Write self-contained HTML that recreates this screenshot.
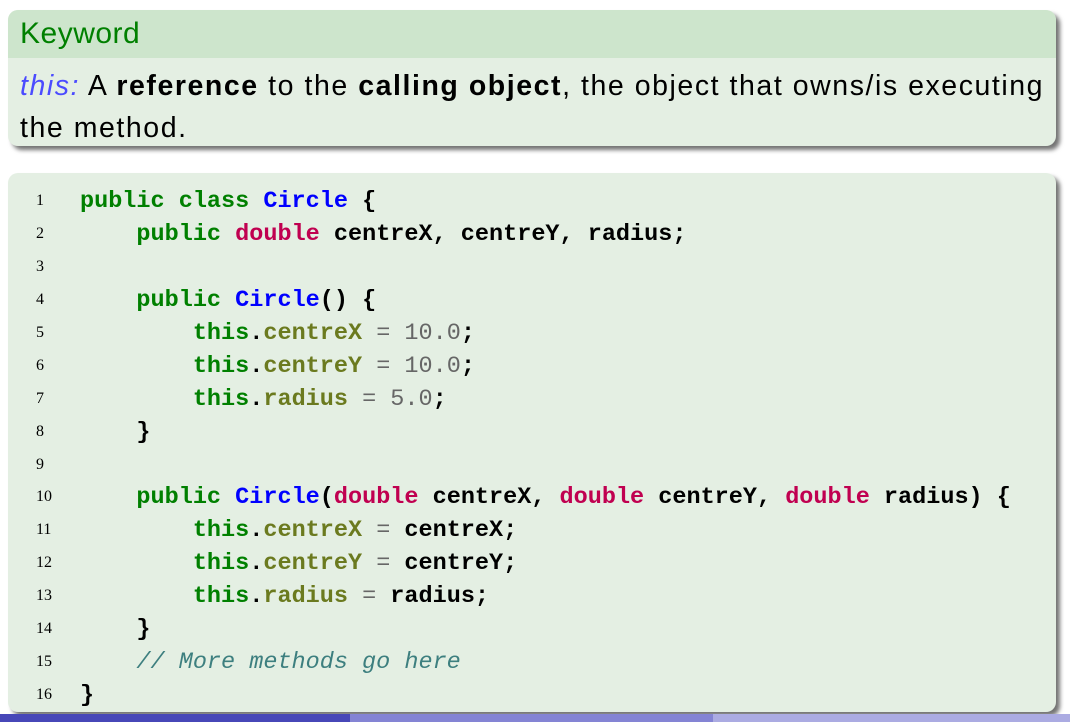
<!DOCTYPE html>
<html><head><meta charset="utf-8"><style>
*{margin:0;padding:0;box-sizing:border-box}
body{width:1070px;height:722px;background:#fff;position:relative;overflow:hidden;font-family:"Liberation Sans",sans-serif}
.box{position:absolute;left:8px;width:1048px;border-radius:10px;box-shadow:4px 4px 4px rgba(0,0,0,.55)}
#kw{top:10px;height:136px;background:#e4efe3}
#kw .h{height:48px;background:#cde5cc;border-radius:10px 10px 0 0;color:#008000;font-size:30px;letter-spacing:0.5px;padding:7px 0 0 12px}
#kw .b{font-size:28.5px;letter-spacing:1.55px;line-height:42px;padding:7px 0 0 12px;color:#000;white-space:nowrap}
#kw .b i{color:#4b4bff}
#code{top:173px;height:539px;background:#e4efe3}
.ln{position:absolute;left:36px;width:20px;font-family:"Liberation Serif",serif;font-size:16px;color:#000}
.cl{position:absolute;left:80px;margin-top:2px;font-family:"Liberation Mono",monospace;font-size:23.5px;white-space:pre;color:#000;font-weight:bold}
.k{color:#008000}.t{color:#c00050}.c{color:#0000ff}.f{color:#6b7a1f}.n{color:#666;font-weight:normal}.cm{color:#3d7f7f;font-style:italic;font-weight:normal}
.ft{position:absolute;top:714px;height:8px}
</style></head><body>
<div class="box" id="kw"><div class="h">Keyword</div>
<div class="b"><i>this:</i> A <b>reference</b> to the <b>calling object</b>, the object that owns/is executing<br>the method.</div></div>
<div class="box" id="code"></div>
<div class="ln" style="top:192px">1</div><div class="cl" style="top:186px"><span class="k">public class</span> <span class="c">Circle</span> {</div>
<div class="ln" style="top:225px">2</div><div class="cl" style="top:219px">    <span class="k">public</span> <span class="t">double</span> centreX, centreY, radius;</div>
<div class="ln" style="top:258px">3</div>
<div class="ln" style="top:291px">4</div><div class="cl" style="top:285px">    <span class="k">public</span> <span class="c">Circle</span>() {</div>
<div class="ln" style="top:324px">5</div><div class="cl" style="top:318px">        <span class="k">this</span>.<span class="f">centreX</span> <span class="n">= 10.0</span>;</div>
<div class="ln" style="top:357px">6</div><div class="cl" style="top:351px">        <span class="k">this</span>.<span class="f">centreY</span> <span class="n">= 10.0</span>;</div>
<div class="ln" style="top:390px">7</div><div class="cl" style="top:384px">        <span class="k">this</span>.<span class="f">radius</span> <span class="n">= 5.0</span>;</div>
<div class="ln" style="top:423px">8</div><div class="cl" style="top:417px">    }</div>
<div class="ln" style="top:456px">9</div>
<div class="ln" style="top:488px">10</div><div class="cl" style="top:482px">    <span class="k">public</span> <span class="c">Circle</span>(<span class="t">double</span> centreX, <span class="t">double</span> centreY, <span class="t">double</span> radius) {</div>
<div class="ln" style="top:521px">11</div><div class="cl" style="top:515px">        <span class="k">this</span>.<span class="f">centreX</span> <span class="n">=</span> centreX;</div>
<div class="ln" style="top:554px">12</div><div class="cl" style="top:548px">        <span class="k">this</span>.<span class="f">centreY</span> <span class="n">=</span> centreY;</div>
<div class="ln" style="top:587px">13</div><div class="cl" style="top:581px">        <span class="k">this</span>.<span class="f">radius</span> <span class="n">=</span> radius;</div>
<div class="ln" style="top:620px">14</div><div class="cl" style="top:614px">    }</div>
<div class="ln" style="top:653px">15</div><div class="cl" style="top:647px">    <span class="cm">// More methods go here</span></div>
<div class="ln" style="top:686px">16</div><div class="cl" style="top:680px">}</div>
<div class="ft" style="left:0;width:350px;background:#4747b8"></div>
<div class="ft" style="left:350px;width:363px;background:#8484d4"></div>
<div class="ft" style="left:713px;width:357px;background:#ababe2"></div>
</body></html>
